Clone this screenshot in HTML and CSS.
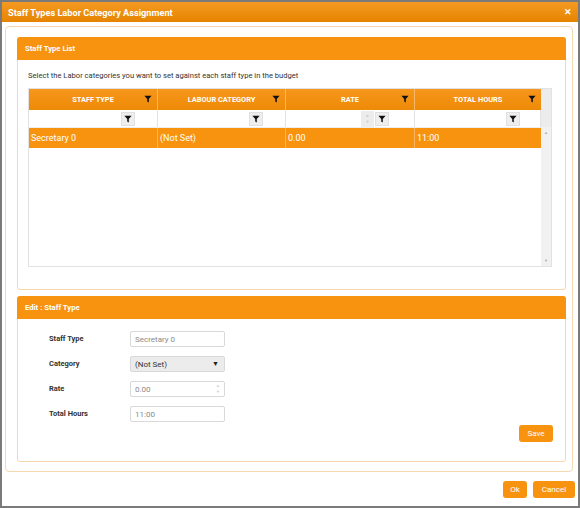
FILE: index.html
```html
<!DOCTYPE html>
<html>
<head>
<meta charset="utf-8">
<link rel="stylesheet" href="styles.css">
</head>
<body>
<div class="dialog">
  <div class="titlebar">
    <span class="title">Staff Types Labor Category Assignment</span>
    <span class="close">✕</span>
  </div>
  <div class="outer">
    <div class="panel list-panel">
      <div class="panel-head">Staff Type List</div>
      <div class="panel-body">
        <div class="desc">Select the Labor categories you want to set against each staff type in the budget</div>
        <div class="grid">
          <div class="grid-main">
            <div class="row head-row">
              <div class="cell c1"><span class="htxt">STAFF TYPE</span><svg class="funnel" viewBox="0 0 10 10"><path d="M0.5 1h9L6 5v4.5L4 8V5z"/></svg></div>
              <div class="cell c2"><span class="htxt">LABOUR CATEGORY</span><svg class="funnel" viewBox="0 0 10 10"><path d="M0.5 1h9L6 5v4.5L4 8V5z"/></svg></div>
              <div class="cell c3"><span class="htxt">RATE</span><svg class="funnel" viewBox="0 0 10 10"><path d="M0.5 1h9L6 5v4.5L4 8V5z"/></svg></div>
              <div class="cell c4"><span class="htxt">TOTAL HOURS</span><svg class="funnel" viewBox="0 0 10 10"><path d="M0.5 1h9L6 5v4.5L4 8V5z"/></svg></div>
            </div>
            <div class="row filter-row">
              <div class="cell c1"><span class="finput"></span><span class="fbtn"><svg class="funnel" viewBox="0 0 10 10"><path d="M0.5 1h9L6 5v4.5L4 8V5z"/></svg></span></div>
              <div class="cell c2"><span class="finput"></span><span class="fbtn"><svg class="funnel" viewBox="0 0 10 10"><path d="M0.5 1h9L6 5v4.5L4 8V5z"/></svg></span></div>
              <div class="cell c3"><span class="finput"></span><span class="spin"><span class="sa">▲</span><span class="sa">▼</span></span><span class="fbtn"><svg class="funnel" viewBox="0 0 10 10"><path d="M0.5 1h9L6 5v4.5L4 8V5z"/></svg></span></div>
              <div class="cell c4"><span class="finput"></span><span class="fbtn"><svg class="funnel" viewBox="0 0 10 10"><path d="M0.5 1h9L6 5v4.5L4 8V5z"/></svg></span></div>
            </div>
            <div class="row data-row">
              <div class="cell c1">Secretary 0</div>
              <div class="cell c2">(Not Set)</div>
              <div class="cell c3">0.00</div>
              <div class="cell c4">11:00</div>
            </div>
          </div>
          <div class="scrollbar">
            <div class="sb-top"></div>
            <div class="sb-track"><span class="arr">▲</span><span class="arr">▼</span></div>
          </div>
        </div>
      </div>
    </div>
    <div class="panel edit-panel">
      <div class="panel-head">Edit : Staff Type</div>
      <div class="panel-body edit-body">
        <div class="form">
          <div class="frow"><label>Staff Type</label><div class="inp">Secretary 0</div></div>
          <div class="frow"><label>Category</label><div class="inp sel"><span>(Not Set)</span><span class="caret">▼</span></div></div>
          <div class="frow"><label>Rate</label><div class="inp num"><span>0.00</span><span class="nspin"><span>▲</span><span>▼</span></span></div></div>
          <div class="frow"><label>Total Hours</label><div class="inp">11:00</div></div>
        </div>
        <div class="save-wrap"><button class="btn">Save</button></div>
      </div>
    </div>
  </div>
  <div class="footer">
    <button class="btn ok">Ok</button>
    <button class="btn">Cancel</button>
  </div>
</div>
</body>
</html>
```

FILE: styles.css
```css
* { box-sizing: border-box; }
html, body { margin: 0; padding: 0; }
body {
  width: 580px;
  height: 508px;
  background: #7a7a7a;
  font-family: Roboto, "Liberation Sans", Arial, sans-serif;
  padding: 2px 2px 0 2px;
  overflow: hidden;
}
.dialog {
  width: 576px;
  height: 504px;
  background: #fff;
  display: flex;
  flex-direction: column;
}
.titlebar {
  height: 20px;
  background: linear-gradient(#f49a22, #e68400);
  display: flex;
  align-items: center;
  justify-content: space-between;
  padding: 0 6px 0 6px;
  color: #fff;
}
.title { font-size: 9.2px; font-weight: 700; }
.close { font-size: 9px; font-weight: 700; }
.outer {
  margin: 4px 0 0 3px;
  width: 568px;
  height: 446px;
  border: 1px solid #f5d8b2;
  border-radius: 4px;
  padding: 10px 6px 0 11px;
  display: flex;
  flex-direction: column;
  gap: 6px;
}
.panel {
  width: 549px;
  border: 1px solid #f6d7ae;
  border-radius: 3px;
  display: flex;
  flex-direction: column;
}
.list-panel { height: 253px; }
.edit-panel { height: 166px; }
.panel-head {
  height: 23px;
  background: #f7930e;
  color: #fff;
  font-size: 7.7px;
  font-weight: 700;
  display: flex;
  align-items: center;
  padding-left: 8px;
  margin: -1px -1px 0 -1px;
  border-radius: 3px 3px 0 0;
}
.panel-body { padding: 0 0 0 10px; flex: 1; }
.desc {
  font-size: 7.6px;
  color: #333;
  height: 28px;
  display: flex;
  align-items: center;
  padding-top: 2px;
}
.grid {
  width: 524px;
  height: 179px;
  border: 1px solid #e2e2e2;
  display: flex;
}
.grid-main { width: 512px; display: flex; flex-direction: column; }
.row { display: flex; }
.cell { flex: none; border-right: 1px solid #f3c58a; display: flex; align-items: center; }
.c1 { width: 129px; }
.c2 { width: 128px; }
.c3 { width: 129px; }
.c4 { width: 126px; border-right: none; }
.head-row { height: 21px; background: linear-gradient(#f6961c, #ee8a06); }
.head-row .cell { justify-content: center; position: relative; border-right-color: #f8b865; }
.htxt { color: #fff; font-size: 7.4px; font-weight: 700; }
.funnel { width: 8px; height: 8px; fill: #111; }
.head-row .funnel { position: absolute; right: 5px; top: 6px; }
.filter-row { height: 18px; background: #fff; border-bottom: 1px solid #eee; }
.filter-row .cell { border-right: 1px solid #e2e2e2; }
.finput { flex: 1; }
.fbtn {
  width: 14px; height: 14px; background: #eee; border: 1px solid #e0e0e0;
  display: flex; align-items: center; justify-content: center;
  margin-right: 22px;
}
.c3 .fbtn { margin-right: 25px; }
.c4 .fbtn { margin-right: 20px; }
.spin {
  width: 13px; height: 16px; background: #ececec; display: flex; flex-direction: column;
  align-items: center; justify-content: center; color: #c8c8c8; font-size: 4px; line-height: 6px;
  margin-right: 1px;
}
.data-row { height: 20px; background: #f7930e; color: #fff; font-size: 9px; }
.data-row .cell { padding-left: 2px; border-right-color: #f9b560; }
.scrollbar { width: 10px; display: flex; flex-direction: column; background: #f1f1f1; }
.sb-top { height: 38px; background: #ececec; }
.sb-track {
  flex: 1; display: flex; flex-direction: column; justify-content: space-between;
  align-items: center; color: #a8a8a8; font-size: 4px; padding: 3px 0 3px;
}
.edit-body { padding: 0; display: flex; flex-direction: column; }
.form { padding: 12px 0 0 31px; display: flex; flex-direction: column; gap: 9px; }
.frow { display: flex; align-items: center; height: 16px; }
.frow label { width: 81px; font-size: 7.5px; font-weight: 700; color: #333; margin-top: -2px; }
.inp {
  width: 95px; height: 16px; border: 1px solid #d9d9d9; border-radius: 2px;
  font-size: 8px; color: #8a8a8a; display: flex; align-items: center; padding-left: 4px;
}
.sel { background: #ececec; color: #333; justify-content: space-between; padding-right: 5px; }
.caret { font-size: 7px; color: #222; }
.num { justify-content: space-between; padding-right: 0; }
.nspin {
  width: 12px; height: 14px; display: flex; flex-direction: column; align-items: center;
  justify-content: center; color: #ccc; font-size: 4px; line-height: 6px;
}
.save-wrap { display: flex; justify-content: flex-end; padding: 3px 12px 0 0; }
.btn {
  background: #f7930e; color: #fff; border: none; border-radius: 3px;
  font-family: Roboto, "Liberation Sans", Arial, sans-serif;
  font-size: 8px; height: 17px; padding: 0 8px; margin: 0;
}
.save-wrap .btn { width: 34px; padding: 0; }
.footer {
  display: flex; justify-content: flex-end; gap: 6px;
  padding: 9px 3px 0 0;
}
.footer .btn { height: 17px; }
.ok { width: 24px; padding: 0; }
.footer .btn:last-child { width: 42px; padding: 0; }
```
